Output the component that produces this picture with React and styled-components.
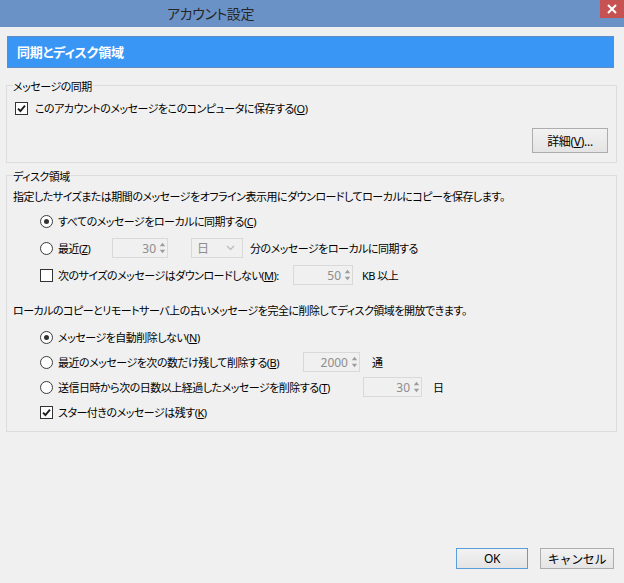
import React from "react";
import styled, { createGlobalStyle } from "styled-components";

const GlobalStyle = createGlobalStyle`
    html, body {
        margin : 0;
        padding : 0;
        background : #f0f0f0;
    }
    body {
        font-family : "Noto Sans", "Noto Sans CJK JP", sans-serif;
        font-size : 11px;
        color : #000;
    }
`;

const CheckBox = ({ checked }) => (
    <CheckFrame>
        {checked ?
            <svg width="11" height="11" viewBox="0 0 11 11">
                <path d="M2 5.6 L4.4 8 L9 2.6" fill="none" stroke="#1e1e1e" strokeWidth="1.9" />
            </svg> : ''}
    </CheckFrame>
);

const Radio = ({ checked }) => (
    <RadioFrame>
        {checked ? <RadioDot /> : ''}
    </RadioFrame>
);

const Spin = ({ value, w }) => (
    <SpinBox $w={w}>
        <SpinValue>{value}</SpinValue>
        <svg width="7" height="14" viewBox="0 0 7 14">
            <path d="M0.8 5.2 L3.5 1.8 L6.2 5.2 Z" fill="#9c9c9c" />
            <path d="M0.8 8.8 L3.5 12.2 L6.2 8.8 Z" fill="#9c9c9c" />
        </svg>
    </SpinBox>
);

const App = () => {
    return (
        <>
            <GlobalStyle />
            <Window>
                <TitleBar>
                    <Title>アカウント設定</Title>
                    <CloseButton>
                        <svg width="10" height="10" viewBox="0 0 10 10">
                            <path d="M1 1 L9 9 M9 1 L1 9" stroke="#fff" strokeWidth="2" />
                        </svg>
                    </CloseButton>
                </TitleBar>

                <PageHeader>同期とディスク領域</PageHeader>

                <Group $mt={'9px'}>
                    <Legend>メッセージの同期</Legend>
                    <Row $indent={'2px'} $mt={'5px'}>
                        <CheckBox checked />
                        <Label $ml={'7px'}>このアカウントのメッセージをこのコンピュータに保存する(<u>O</u>)</Label>
                    </Row>
                    <ButtonRow>
                        <Button $w={'76px'} $h={'25px'}>詳細(<u>V</u>)...</Button>
                    </ButtonRow>
                </Group>

                <Group $mt={'4px'}>
                    <Legend>ディスク領域</Legend>
                    <Desc $mt={'8px'}>指定したサイズまたは期間のメッセージをオフライン表示用にダウンロードしてローカルにコピーを保存します。</Desc>
                    <Options $mt={'8px'} $gap={'7px'}>
                        <Row>
                            <Radio checked />
                            <Label>すべてのメッセージをローカルに同期する(<u>C</u>)</Label>
                        </Row>
                        <Row>
                            <Radio />
                            <Label $w={'54px'}>最近(<u>Z</u>)</Label>
                            <Spin value="30" w="56px" />
                            <Select>
                                <span>日</span>
                                <svg width="9" height="6" viewBox="0 0 9 6">
                                    <path d="M1 1 L4.5 4.5 L8 1" fill="none" stroke="#b9b9b9" strokeWidth="1.2" />
                                </svg>
                            </Select>
                            <Label $ml={'7px'}>分のメッセージをローカルに同期する</Label>
                        </Row>
                        <Row>
                            <CheckBox />
                            <Label $w={'235px'}>次のサイズのメッセージはダウンロードしない(<u>M</u>):</Label>
                            <Spin value="50" w="60px" />
                            <Label $ml={'9px'}>KB 以上</Label>
                        </Row>
                    </Options>

                    <Desc $mt={'20px'}>ローカルのコピーとリモートサーバ上の古いメッセージを完全に削除してディスク領域を開放できます。</Desc>
                    <Options $mt={'10px'} $gap={'5px'}>
                        <Row>
                            <Radio checked />
                            <Label>メッセージを自動削除しない(<u>N</u>)</Label>
                        </Row>
                        <Row>
                            <Radio />
                            <Label $w={'245px'}>最近のメッセージを次の数だけ残して削除する(<u>B</u>)</Label>
                            <Spin value="2000" w="57px" />
                            <Label $ml={'12px'}>通</Label>
                        </Row>
                        <Row>
                            <Radio />
                            <Label $w={'305px'}>送信日時から次の日数以上経過したメッセージを削除する(<u>T</u>)</Label>
                            <Spin value="30" w="59px" />
                            <Label $ml={'11px'}>日</Label>
                        </Row>
                        <Row>
                            <CheckBox checked />
                            <Label>スター付きのメッセージは残す(<u>K</u>)</Label>
                        </Row>
                    </Options>
                </Group>

                <Footer>
                    <Button $w={'72px'} $primary>OK</Button>
                    <Button $w={'74px'}>キャンセル</Button>
                </Footer>
            </Window>
        </>
    );
};

const Window = styled.div`
    width : 624px;
    height : 583px;
    display : flex;
    flex-direction : column;
    background : #f0f0f0;
    overflow : hidden;
    font-feature-settings : "palt";
`;

const TitleBar = styled.div`
    height : 27px;
    flex-shrink : 0;
    display : flex;
    align-items : flex-start;
    background : #6b92c6;
`;

const Title = styled.div`
    padding-left : 167px;
    line-height : 27px;
    font-size : 14px;
    letter-spacing : -0.4px;
    color : #262626;
`;

const CloseButton = styled.div`
    margin-left : auto;
    width : 24px;
    height : 18px;
    background : #c75252;
    display : flex;
    align-items : center;
    justify-content : center;
`;

const PageHeader = styled.div`
    margin : 9px 10px 0 7px;
    height : 32px;
    box-sizing : border-box;
    border : 1px solid #5d8fc6;
    background : #3a96f5;
    color : #fff;
    font-weight : bold;
    font-size : 13px;
    letter-spacing : -0.2px;
    line-height : 30px;
    padding-left : 9px;
    flex-shrink : 0;
`;

const Group = styled.fieldset`
    margin : ${({ $mt }) => $mt} 7px 0 6px;
    padding : 0 8px 9px 6px;
    border : 1px solid #dcdcdc;
    min-width : 0;
    display : flex;
    flex-direction : column;
    flex-shrink : 0;
`;

const Legend = styled.legend`
    padding : 5px 1px 1px 0;
    line-height : 10px;
    letter-spacing : -0.5px;
`;

const Desc = styled.div`
    margin-top : ${({ $mt }) => $mt || '0'};
    line-height : 12px;
    white-space : nowrap;
    letter-spacing : -0.5px;
`;

const Options = styled.div`
    margin-top : ${({ $mt }) => $mt};
    display : flex;
    flex-direction : column;
    gap : ${({ $gap }) => $gap};
`;

const Row = styled.div`
    height : 20px;
    margin-top : ${({ $mt }) => $mt || '0'};
    padding-left : ${({ $indent }) => $indent || '27px'};
    display : flex;
    align-items : center;
`;

const Label = styled.span`
    margin-left : ${({ $ml }) => $ml || '5px'};
    width : ${({ $w }) => $w || 'auto'};
    flex-shrink : 0;
    white-space : nowrap;
    letter-spacing : -0.5px;
`;

const CheckFrame = styled.div`
    width : 13px;
    height : 13px;
    box-sizing : border-box;
    border : 1px solid #333;
    background : #fff;
    display : flex;
    align-items : center;
    justify-content : center;
    flex-shrink : 0;
`;

const RadioFrame = styled.div`
    width : 13px;
    height : 13px;
    box-sizing : border-box;
    border : 1px solid #3a3a3a;
    border-radius : 50%;
    background : #fff;
    display : flex;
    align-items : center;
    justify-content : center;
    flex-shrink : 0;
`;

const RadioDot = styled.div`
    width : 5px;
    height : 5px;
    border-radius : 50%;
    background : #333;
`;

const SpinBox = styled.div`
    width : ${({ $w }) => $w};
    height : 20px;
    box-sizing : border-box;
    border : 1px solid #d9d9d9;
    display : flex;
    align-items : center;
    justify-content : flex-end;
    padding-right : 1px;
    gap : 3px;
    flex-shrink : 0;
`;

const SpinValue = styled.span`
    color : #8d8d8d;
    font-size : 12px;
`;

const Select = styled.div`
    margin-left : 23px;
    width : 52px;
    height : 20px;
    box-sizing : border-box;
    border : 1px solid #d9d9d9;
    display : flex;
    align-items : center;
    justify-content : space-between;
    padding : 0 7px 0 5px;
    color : #8d8d8d;
    font-size : 12px;
    flex-shrink : 0;
`;

const ButtonRow = styled.div`
    margin-top : 10px;
    display : flex;
    justify-content : flex-end;
`;

const Button = styled.button`
    width : ${({ $w }) => $w};
    height : ${({ $h }) => $h || '21px'};
    box-sizing : border-box;
    padding : 0;
    border : 1px solid ${({ $primary }) => $primary ? '#5a9cdc' : '#adadad'};
    background : linear-gradient(#f2f2f2, #e4e4e4);
    font-family : inherit;
    font-size : 12px;
    color : #000;
    letter-spacing : -0.3px;
`;

const Footer = styled.div`
    margin-top : auto;
    padding : 0 10px 14px 0;
    display : flex;
    justify-content : flex-end;
    gap : 12px;
`;

export default App;
